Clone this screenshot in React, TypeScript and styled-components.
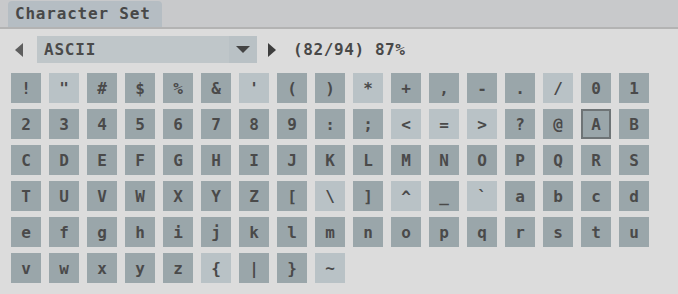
import styled, { createGlobalStyle } from "styled-components";

const GlobalStyle = createGlobalStyle`
  html, body {
    margin: 0;
    padding: 0;
    background: #dcdcdc;
  }
`;

const FIRST = 33;
const LAST = 126;
const MISSING = ['"', "'", "*", "/", "<", "=", ">", "\\", "^", "`", "{", "~"];
const SELECTED = "A";

const chars: string[] = [];
for (let c = FIRST; c <= LAST; c++) chars.push(String.fromCharCode(c));

export default function App() {
  const found = chars.length - MISSING.length;
  const pct = Math.round((found / chars.length) * 100);

  return (
    <>
      <GlobalStyle />
      <Panel>
        <Header>
          <Tab>Character Set</Tab>
        </Header>
        <Toolbar>
          <ArrowButton $side="left">
            <svg width="8" height="14" viewBox="0 0 8 14">
              <polygon points="8,0 8,14 0,7" fill="currentColor" />
            </svg>
          </ArrowButton>
          <Dropdown>
            <DropdownLabel>ASCII</DropdownLabel>
            <DropdownToggle>
              <svg width="14" height="8" viewBox="0 0 14 8">
                <polygon points="0,0 14,0 7,7" fill="currentColor" />
              </svg>
            </DropdownToggle>
          </Dropdown>
          <ArrowButton $side="right">
            <svg width="8" height="14" viewBox="0 0 8 14">
              <polygon points="0,0 8,7 0,14" fill="currentColor" />
            </svg>
          </ArrowButton>
          <Stats>
            ({found}/{chars.length}) {pct}%
          </Stats>
        </Toolbar>
        <Grid>
          {chars.map((ch) => (
            <Cell
              key={ch}
              $missing={MISSING.includes(ch)}
              $selected={ch === SELECTED}
            >
              {ch}
            </Cell>
          ))}
        </Grid>
      </Panel>
    </>
  );
}

const Panel = styled("div")`
  width: 678px;
  height: 294px;
  background: #dcdcdc;
  font-family: "DejaVu Sans Mono", "Liberation Mono", monospace;
  font-size: 16px;
  font-weight: bold;
  color: #4a4a4a;
  overflow: hidden;
`;

const Header = styled("div")`
  height: 27px;
  background: #c8c9cb;
  border-bottom: 2px solid #b3b3b3;
  display: flex;
  align-items: flex-end;
  padding-left: 8px;
`;

const Tab = styled("div")`
  width: 147px;
  height: 26px;
  padding-left: 7px;
  background: #b5bdc3;
  border-radius: 4px 4px 0 0;
  line-height: 26px;
  letter-spacing: 0.8px;
  color: #484848;
`;

const Toolbar = styled("div")`
  display: flex;
  align-items: center;
  height: 27px;
  padding: 7px 0 0 15px;
`;

const ArrowButton = styled("div")<{ $side: "left" | "right" }>`
  display: flex;
  align-items: center;
  width: 8px;
  height: 14px;
  color: ${(p) => (p.$side === "left" ? "#5e5e5e" : "#3e3e3e")};
  margin: ${(p) => (p.$side === "left" ? "0 14px 0 0" : "0 17px 0 11px")};
`;

const Dropdown = styled("div")`
  display: flex;
  width: 220px;
  height: 27px;
  background: #bfc6c9;
`;

const DropdownLabel = styled("div")`
  flex: 1;
  padding-left: 7px;
  line-height: 27px;
  letter-spacing: 0.8px;
`;

const DropdownToggle = styled("div")`
  width: 28px;
  display: flex;
  align-items: center;
  justify-content: center;
  background: #b9c1c5;
  color: #444444;
`;

const Stats = styled("div")`
  letter-spacing: 0.6px;
  color: #484848;
`;

const Grid = styled("div")`
  display: grid;
  grid-template-columns: repeat(17, 30px);
  column-gap: 8px;
  row-gap: 6px;
  padding: 10px 0 0 11px;
`;

const Cell = styled("div")<{ $missing: boolean; $selected: boolean }>`
  width: 30px;
  height: 30px;
  box-sizing: border-box;
  display: flex;
  align-items: center;
  justify-content: center;
  background: ${(p) => (p.$missing ? "#b9c2c6" : "#9aa6aa")};
  border: ${(p) => (p.$selected ? "2px solid #6e7476" : "none")};
  color: #4a4a4a;
`;
